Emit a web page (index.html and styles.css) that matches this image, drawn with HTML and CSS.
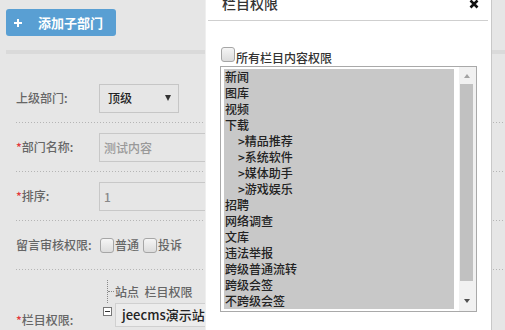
FILE: index.html
```html
<!DOCTYPE html>
<html>
<head>
    <meta charset="utf-8">
    <title>部门管理</title>
    <link rel="stylesheet" href="styles.css">
</head>
<body>
    <div class="page">
        <button class="btn-add">
            <svg class="plus" width="8" height="8" viewBox="0 0 8 8"><path d="M4 0V8M0 4H8" stroke="#fff" stroke-width="2"/></svg>
            添加子部门
        </button>
        <div class="divider"></div>

        <div class="form">
            <div class="form-row">
                <label class="form-label">上级部门:</label>
                <div class="select-box"><span>顶级</span><span class="caret"></span></div>
            </div>
            <div class="form-row">
                <label class="form-label"><span class="req">*</span>部门名称:</label>
                <div class="text-input placeholder">测试内容</div>
            </div>
            <div class="form-row">
                <label class="form-label"><span class="req">*</span>排序:</label>
                <div class="text-input">1</div>
            </div>
            <div class="form-row">
                <label class="form-label">留言审核权限:</label>
                <span class="chk"></span><span class="chk-text">普通</span>
                <span class="chk chk-next"></span><span class="chk-text">投诉</span>
            </div>
            <div class="form-row last">
                <label class="form-label tree-label"><span class="req">*</span>栏目权限:</label>
                <div class="tree">
                    <div class="tree-head">站点&nbsp;&nbsp;栏目权限</div>
                    <div class="tree-node">
                        <span class="toggle"></span>
                        <span class="site">jeecms演示站</span>
                    </div>
                </div>
            </div>
        </div>
    </div>

    <div class="dialog">
        <div class="dialog-head">
            <span class="dialog-title">栏目权限</span>
            <svg class="dialog-close" width="10" height="10" viewBox="0 0 10 10"><path d="M1.5 1.5L8.5 8.5M8.5 1.5L1.5 8.5" stroke="#111" stroke-width="2.6"/></svg>
        </div>
        <div class="dialog-body">
            <div class="all-row">
                <span class="chk"></span><span class="all-text">所有栏目内容权限</span>
            </div>
            <div class="listbox">
                <div class="list-items">
                    <div class="opt">新闻</div>
                    <div class="opt">图库</div>
                    <div class="opt">视频</div>
                    <div class="opt">下载</div>
                    <div class="opt sub">&gt;精品推荐</div>
                    <div class="opt sub">&gt;系统软件</div>
                    <div class="opt sub">&gt;媒体助手</div>
                    <div class="opt sub">&gt;游戏娱乐</div>
                    <div class="opt">招聘</div>
                    <div class="opt">网络调查</div>
                    <div class="opt">文库</div>
                    <div class="opt">违法举报</div>
                    <div class="opt">跨级普通流转</div>
                    <div class="opt">跨级会签</div>
                    <div class="opt">不跨级会签</div>
                </div>
                <div class="scroll">
                    <span class="arrow-up"></span>
                    <span class="thumb"></span>
                    <span class="arrow-down"></span>
                </div>
            </div>
        </div>
    </div>
</body>
</html>
```

FILE: styles.css
```css
body {
    margin: 0;
    height: 330px;
    overflow: hidden;
    background-color: #e6e6e6;
    font-family: "Noto Sans CJK SC", "Liberation Sans", sans-serif;
    font-size: 12px;
    font-weight: 500;
    color: #666;
}

.page {
    padding: 9px 0 0 6px;
}

.btn-add {
    display: flex;
    align-items: center;
    width: 110px;
    height: 27px;
    padding: 0 0 0 8px;
    border: none;
    border-radius: 3px;
    background-color: #599fd3;
    color: #fff;
    font-family: "Noto Sans CJK SC", sans-serif;
    font-size: 13px;
    font-weight: bold;
    line-height: 16px;
}

.plus {
    margin-right: 16px;
}

.divider {
    height: 4px;
    margin-top: 14px;
    background-color: #dadada;
}

.form {
    margin: 20px 0 0 10px;
}

.form-row {
    display: flex;
    align-items: center;
    height: 48px;
    padding-bottom: 1px;
    line-height: 16px;
    background: linear-gradient(to right, #b5b5b5 1px, transparent 1px) left bottom / 3px 1px repeat-x;
}

.form-row.last {
    align-items: flex-start;
    background: none;
}

.form-label {
    width: 83px;
    flex-shrink: 0;
}

.req {
    color: #e4393c;
}

.select-box {
    box-sizing: border-box;
    display: flex;
    align-items: center;
    justify-content: space-between;
    width: 80px;
    height: 29px;
    padding: 0 7px 0 8px;
    border: 1px solid #c6c6c6;
    color: #222;
}

.caret {
    width: 0;
    height: 0;
    border-left: 3.5px solid transparent;
    border-right: 3.5px solid transparent;
    border-top: 6px solid #333;
}

.text-input {
    box-sizing: border-box;
    width: 140px;
    height: 29px;
    padding-left: 4px;
    border: 1px solid #c8c8c8;
    line-height: 27px;
    color: #888;
}

.placeholder {
    color: #999;
}

.chk {
    box-sizing: border-box;
    display: inline-block;
    width: 14px;
    height: 15px;
    margin-left: 1px;
    border: 1px solid #a6a6a6;
    border-radius: 3px;
    background: linear-gradient(#f5f5f5, #dcdcdc);
}

.chk-text {
    margin-left: 1px;
}

.chk-next {
    margin-left: 4px;
}

.tree-label {
    margin-top: 42px;
}

.tree {
    margin-top: 10px;
}

.tree-head {
    position: relative;
    height: 23px;
    margin-left: 8px;
    padding-left: 7px;
    border-left: 1px dotted #888;
    line-height: 23px;
    color: #666;
}

.tree-head::before {
    content: "";
    position: absolute;
    left: 0;
    top: 11px;
    width: 6px;
    border-top: 1px dotted #888;
}

.tree-node {
    display: flex;
    align-items: flex-start;
}

.toggle {
    position: relative;
    box-sizing: border-box;
    width: 9px;
    height: 9px;
    margin: 4px 3px 0 4px;
    border: 1px solid #777;
    background-color: #fff;
}

.toggle::after {
    content: "";
    position: absolute;
    left: 1px;
    top: 3px;
    width: 5px;
    height: 1px;
    background-color: #333;
}

.site {
    box-sizing: border-box;
    height: 24px;
    padding: 0 6px;
    border: 1px solid #d0d0d0;
    background-color: #ececec;
    font-size: 13px;
    line-height: 22px;
    color: #222;
    white-space: nowrap;
}

/* dialog layer */
.dialog {
    position: absolute;
    left: 205px;
    top: -14px;
    width: 285px;
    height: 344px;
    background-color: #fff;
    border-left: 1px solid #efefef;
    border-right: 1px solid #c8c8c8;
}

.dialog-head {
    display: flex;
    align-items: center;
    justify-content: space-between;
    height: 34px;
    margin: 0 3px 0 2px;
    padding: 0 9px 0 14px;
    border-bottom: 1px solid #cfcfcf;
}

.dialog-title {
    font-size: 14px;
    color: #333;
}

.dialog-close {
    margin-top: 2px;
}

.dialog-body {
    padding: 0 14px;
}

.all-row {
    display: flex;
    align-items: flex-start;
    height: 19px;
    margin-top: 26px;
}

.all-text {
    margin-left: 1px;
    padding-top: 3px;
    line-height: 16px;
    color: #333;
}

.listbox {
    display: flex;
    width: 255px;
    height: 244px;
    border: 1px solid #a9a9a9;
}

.list-items {
    flex: 1;
    padding: 2px 5px 0 3px;
    overflow: hidden;
}

.opt {
    padding-left: 1px;
    background-color: #c8c8c8;
    line-height: 16px;
    color: #222;
    white-space: nowrap;
}

.opt.sub {
    padding-left: 14px;
}

.scroll {
    position: relative;
    width: 17px;
    background-color: #f1f1f1;
}

.arrow-up,
.arrow-down {
    position: absolute;
    left: 5px;
    width: 0;
    height: 0;
    border-left: 3.5px solid transparent;
    border-right: 3.5px solid transparent;
}

.arrow-up {
    top: 7px;
    border-bottom: 4px solid #a3a3a3;
}

.arrow-down {
    bottom: 8px;
    border-top: 4px solid #505050;
}

.thumb {
    position: absolute;
    left: 1px;
    top: 17px;
    width: 13px;
    height: 197px;
    background-color: #c1c1c1;
}
```
